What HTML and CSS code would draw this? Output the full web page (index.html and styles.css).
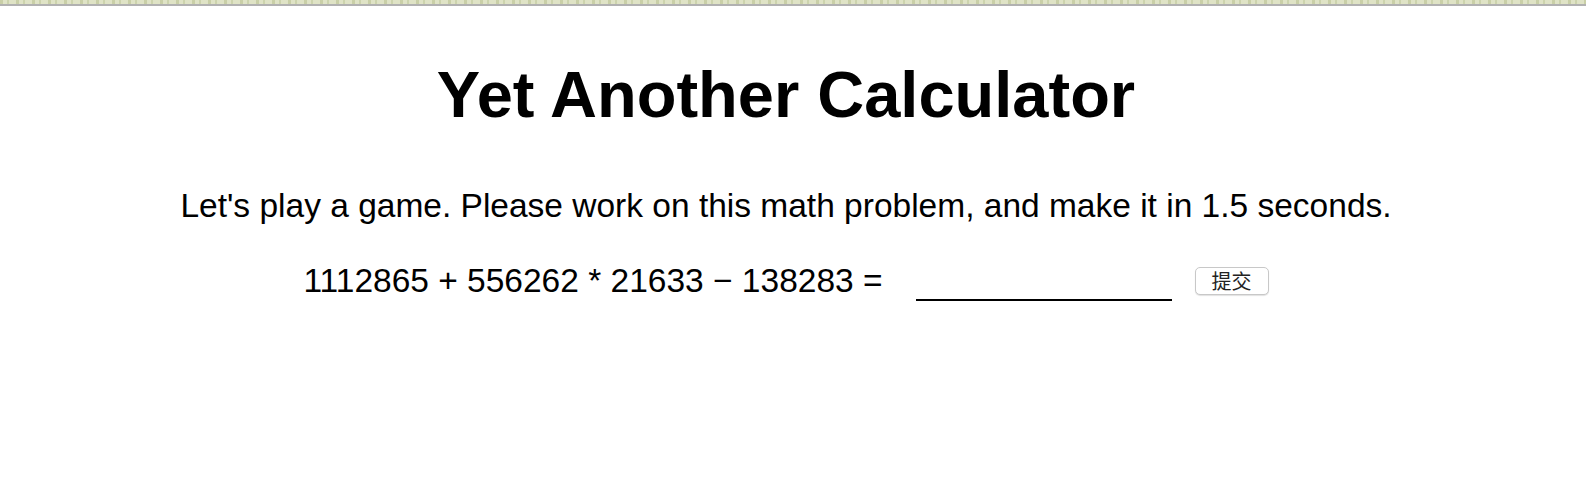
FILE: index.html
```html
<!DOCTYPE html>
<html lang="en">
<head>
<meta charset="utf-8">
<title>Yet Another Calculator</title>
<link rel="stylesheet" href="styles.css">
</head>
<body>
<div class="topbar"></div>
<main class="page">
  <h1 class="title">Yet Another Calculator</h1>
  <p class="intro">Let's play a game. Please work on this math problem, and make it in 1.5 seconds.</p>
  <form class="problem">
    <span class="expr">1112865 + 556262 * 21633 − 138283 =</span>
    <input class="answer" type="text">
    <button class="submit" type="button">提交</button>
  </form>
</main>
</body>
</html>
```
FILE: styles.css
```css
html, body {
  margin: 0;
  padding: 0;
  background: #ffffff;
}
body {
  font-family: "Liberation Sans", "Noto Sans CJK SC", Arial, sans-serif;
  color: #000;
}
.topbar {
  height: 4px;
  border-bottom: 2px solid #b1b1b1;
  background:
    repeating-linear-gradient(90deg, rgba(160,170,110,0.35) 0 3px, transparent 3px 7px, rgba(150,165,100,0.25) 7px 9px, transparent 9px 16px),
    #dfe3c6;
}
.page {
  padding-right: 14px;
  text-align: center;
}
.title {
  margin: 0;
  padding-top: 51px;
  font-size: 65px;
  font-weight: bold;
  line-height: 76px;
}
.intro {
  margin: 54px 0 0;
  font-size: 33.5px;
  line-height: 38px;
}
.problem {
  margin-top: 36px;
  display: flex;
  justify-content: center;
  align-items: center;
}
.expr {
  font-size: 33.5px;
  line-height: 38px;
}
.answer {
  margin-left: 33px;
  width: 256px;
  height: 32px;
  border: none;
  border-bottom: 2px solid #000;
  padding: 0;
  outline: none;
  background: transparent;
  font-size: 20px;
  margin-top: 6px;
}
.submit {
  margin-left: 23px;
  width: 74px;
  height: 28px;
  padding: 0;
  font-family: "Noto Sans CJK SC", sans-serif;
  font-size: 20px;
  line-height: 24px;
  color: #222;
  background: #fff;
  border: 1px solid #c8c8c8;
  border-radius: 5px;
  box-shadow: 0 1px 1px rgba(0,0,0,0.12);
}
```
